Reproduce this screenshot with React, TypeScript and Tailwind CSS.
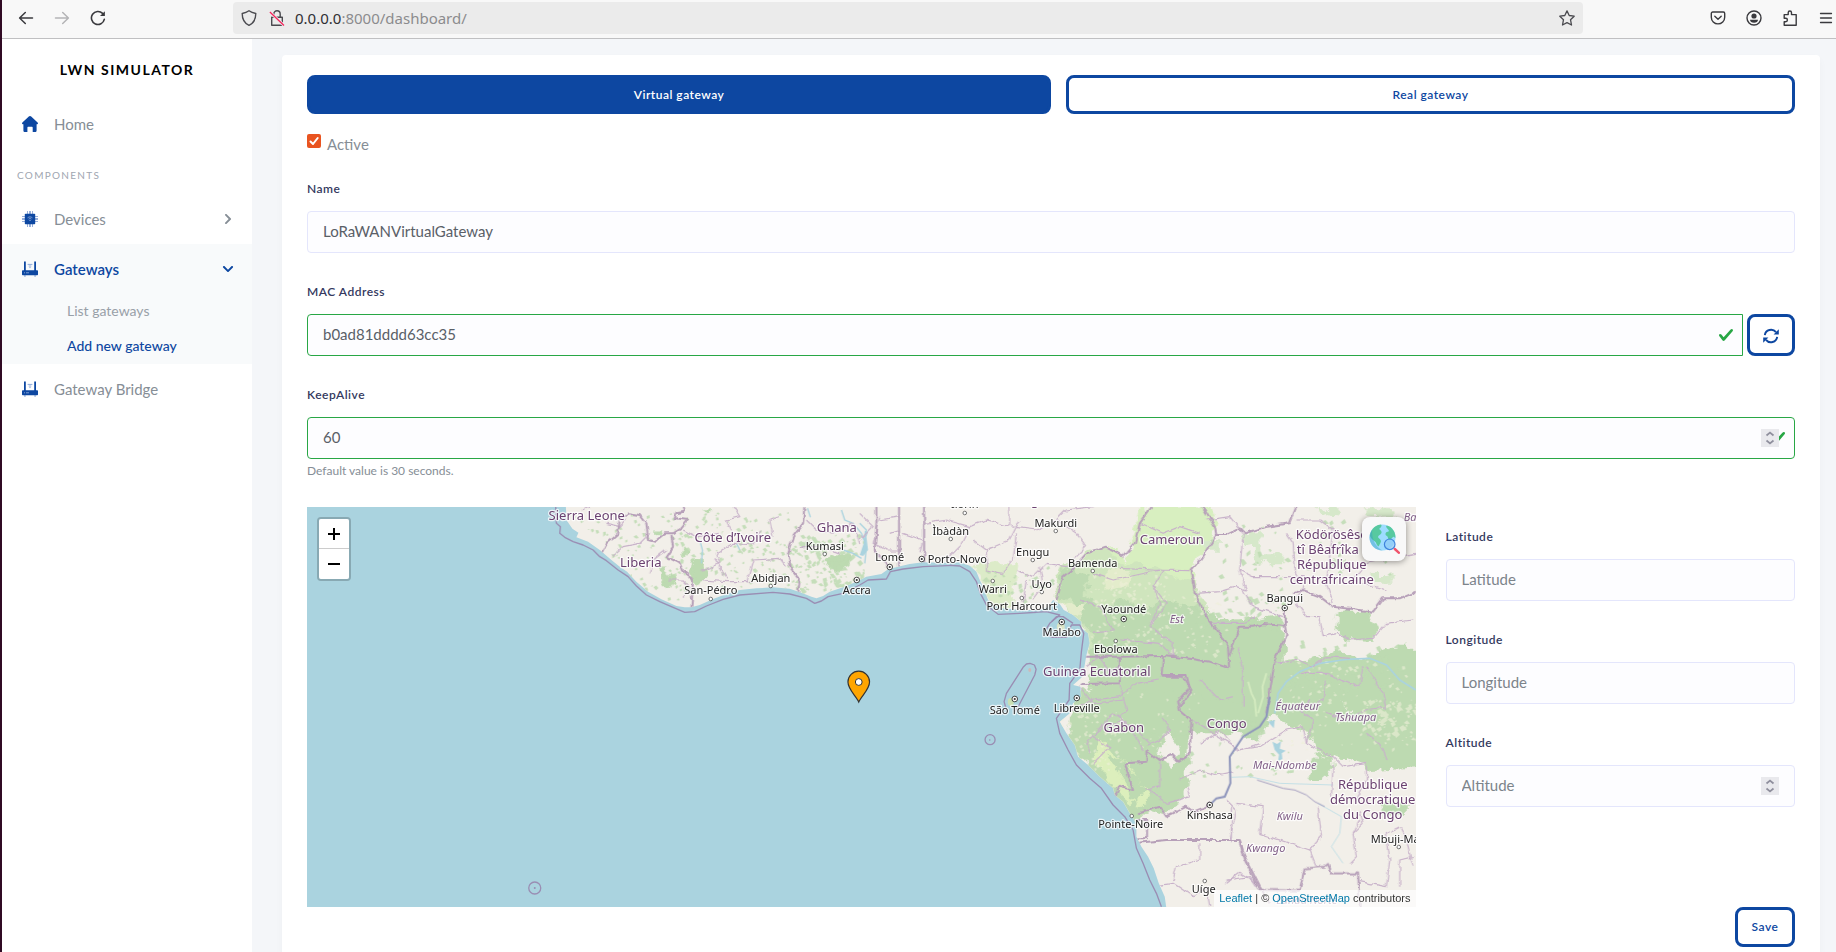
import type { ReactNode } from "react";
import { FaChevronDown, FaChevronRight } from "react-icons/fa";

/* ---------- icons ---------- */

function BackIcon() {
  return (
    <svg viewBox="0 0 16 16" className="size-4" fill="none" stroke="currentColor" strokeWidth="1.5" strokeLinecap="round" strokeLinejoin="round">
      <path d="M14.5 8H1.8M7.3 2.5 1.6 8l5.7 5.5" />
    </svg>
  );
}

function ForwardIcon() {
  return (
    <svg viewBox="0 0 16 16" className="size-4" fill="none" stroke="currentColor" strokeWidth="1.5" strokeLinecap="round" strokeLinejoin="round">
      <path d="M1.5 8h12.7M8.7 2.5 14.4 8l-5.7 5.5" />
    </svg>
  );
}

function ReloadIcon() {
  return (
    <svg viewBox="0 0 16 16" className="size-4" fill="none" stroke="currentColor" strokeWidth="1.6" strokeLinecap="round">
      <path d="M14.3 9.3A6.5 6.5 0 1 1 12.6 3.4" />
      <path d="M14.9 1.2v4.9H10z" fill="currentColor" stroke="none" />
    </svg>
  );
}

function ShieldIcon() {
  return (
    <svg viewBox="0 0 16 16" className="size-4" fill="none" stroke="currentColor" strokeWidth="1.4" strokeLinejoin="round">
      <path d="M8 .8C6.300 2 3.800 3 1.200 3.500 1.200 9 3.400 13.300 8 15.300c4.600-2 6.800-6.300 6.800-11.800C12.200 3 9.700 2 8 .8z" />
    </svg>
  );
}

function InsecureLockIcon() {
  return (
    <svg viewBox="0 0 16 16" className="size-4" fill="none">
      <path d="M2.700 7.200h10.600v8H2.700zM4.800 7V4a3.200 3.200 0 0 1 6.400 0v3" stroke="#4a4a4f" strokeWidth="1.400" strokeLinejoin="round" />
      <path d="M.9 2 15 15.500" stroke="#ebebeb" strokeWidth="3" />
      <path d="M.9 2 15 15.500" stroke="#f5245c" strokeWidth="1.300" />
    </svg>
  );
}

function StarIcon() {
  return (
    <svg viewBox="0 0 16 16" className="size-4" fill="none" stroke="currentColor" strokeWidth="1.3" strokeLinejoin="round">
      <path d="m8 .9 2.200 4.600 5 .7-3.700 3.500 1 5.300L8 12.600 3.500 15l1-5.300L.8 6.200l5-.7z" />
    </svg>
  );
}

function PocketIcon() {
  return (
    <svg viewBox="0 0 16 16" className="size-4" fill="none" stroke="currentColor" strokeWidth="1.4" strokeLinecap="round" strokeLinejoin="round">
      <path d="M2.700 2h10.600c.8 0 1.400.6 1.400 1.400v3.800a6.700 6.700 0 0 1-13.400 0V3.400C1.300 2.600 1.900 2 2.700 2z" />
      <path d="M4.800 6.200 8 9.200l3.200-3" />
    </svg>
  );
}

function AccountIcon() {
  return (
    <svg viewBox="0 0 16 16" className="size-4">
      <circle cx="8" cy="8" r="7" fill="none" stroke="currentColor" strokeWidth="1.4" />
      <circle cx="8" cy="6" r="2.600" fill="currentColor" />
      <path d="M4 9.800h8c0 1.800-1.700 3-4 3s-4-1.200-4-3z" fill="currentColor" />
    </svg>
  );
}

function ExtensionIcon() {
  return (
    <svg viewBox="0 0 16 16" className="size-4" fill="none" stroke="currentColor" strokeWidth="1.4" strokeLinejoin="round">
      <path d="M2.200 4.600h4V2.700a1.600 1.600 0 0 1 3.300 0v1.900h4.700v10.600H2.200v-3.500h1.500a1.700 1.700 0 0 0 0-3.400H2.200z" />
    </svg>
  );
}

function MenuIcon() {
  return (
    <svg viewBox="0 0 16 16" className="size-4" stroke="currentColor" strokeWidth="1.300" strokeLinecap="round">
      <path d="M2.500 3.500h11M2.500 8h11M2.500 12.500h11" />
    </svg>
  );
}

function HomeIcon() {
  return (
    <svg viewBox="0 0 16 16" className="size-4" fill="currentColor">
      <path d="M8 0c.5 0 .9.200 1.200.5l6.400 6.100c.7.700.4 1.700-.5 1.700h-.5v6.100c0 .9-.7 1.600-1.600 1.600h-2.300v-4.200c0-.6-.4-1-1-1H6.400c-.6 0-1 .4-1 1V16H3c-.9 0-1.600-.7-1.600-1.600V8.300H.9c-.9 0-1.200-1-.5-1.700L6.800.5C7.100.200 7.500 0 8 0z" />
    </svg>
  );
}

function ChipIcon() {
  return (
    <svg viewBox="0 0 16 16" className="size-4">
      <path d="M5.500 0v16M7.500 0v16M8.500 0v16M10.500 0v16M0 5.500h16M0 7.500h16M0 8.500h16M0 10.500h16" stroke="#7d9bd0" strokeWidth=".8" />
      <rect x="2.800" y="2.800" width="10.400" height="10.400" rx=".8" fill="#0d47a1" />
      <path d="M5.600 6.800c1.400-1.200 3.400-1.200 4.800 0M6.600 8.100c.8-.7 2-.7 2.800 0" stroke="#8fa9d8" strokeWidth=".9" fill="none" />
      <circle cx="8" cy="9.400" r=".7" fill="#8fa9d8" />
    </svg>
  );
}

function RouterIcon() {
  return (
    <svg viewBox="0 0 16 16" className="size-4">
      <path d="M2 .6h1.800v9.400H2zM12.200.6H14v9.400h-1.800z" fill="#0d47a1" />
      <path d="M5.600 3.400h4.800M6.700 5h2.600" stroke="#8fa9d8" strokeWidth="1" />
      <circle cx="8" cy="6.500" r=".7" fill="#8fa9d8" />
      <rect x="0" y="9.300" width="16" height="5" rx=".8" fill="#0d47a1" />
      <path d="M2 11.800h1M4 11.800h3" stroke="#9bb3de" strokeWidth=".8" />
      <path d="M2 14.300h1.800v1.200H2zM12.200 14.300H14v1.200h-1.800z" fill="#7d9bd0" />
    </svg>
  );
}

function RefreshIcon() {
  return (
    <svg viewBox="0 0 16 16" className="size-4" fill="none" stroke="currentColor" strokeWidth="1.900">
      <path d="M1.800 7.200A6.300 6.300 0 0 1 13 4.200M14.200 8.800A6.300 6.300 0 0 1 3 11.800" />
      <path d="M15.800 1.200v5.200h-5.200zM.2 14.800V9.600h5.200z" fill="currentColor" stroke="none" />
    </svg>
  );
}

function ValidIcon() {
  return (
    <svg viewBox="0 0 8 8" className="size-4" fill="#28a745">
      <path d="M2.300 6.730.6 4.530c-.4-1.040.46-1.400 1.100-.8l1.100 1.400 3.400-3.800c.6-.63 1.600-.27 1.200.7l-4 4.600c-.43.5-.8.4-1.100.1z" />
    </svg>
  );
}

function GlobeSearchIcon() {
  return (
    <svg viewBox="0 0 32 32" className="size-8">
      <circle cx="14.500" cy="14.500" r="13" fill="#9edcff" />
      <path d="M3 9C5 4.500 9 1.700 13 1.600c1.500 1.400-.5 3.400-2 4.400 1.500 1 3 2 2.500 4-1 2-3 2-3.500 4 .5 1.500 2.500 2 3 4-.3 2.500-1.500 3-2.300 5.500-1.700-.5-2.200-3-3.200-4.500C5.500 17.500 3 16 2 13c0-1.500.3-2.700 1-4z" fill="#57c9a0" />
      <path d="M18 3c2-.6 4 .6 5.500 2 2.500 2.300 4 5.500 4 9.500-.8 1-1.500-1.500-2.500-.5-1.500 1.500-2.500 3.500-4 3-1.500-1-.5-3-2-4-1.500-.5-2-2-1-3.500 1-1 2.500-.5 3-1.500-.5-1.800-2.500-2.200-3-5z" fill="#57c9a0" />
      <path d="M14.500 27.500A13 13 0 0 1 1.500 14.500c0-3 .9-5.500 2.500-7.700C4 18 8 24 14.500 27.500z" fill="#3b9fc4" opacity=".45" />
      <circle cx="21.700" cy="21.300" r="5.300" fill="#8fc9f5" fillOpacity=".7" stroke="#3f83dc" strokeWidth="1.200" />
      <path d="m26.800 26 4.200 3.800" stroke="#f0546c" strokeWidth="2.400" strokeLinecap="round" />
    </svg>
  );
}

/* ---------- map ---------- */

type Label = { t: string; x: number; y: number; start?: boolean };

const countries: Label[] = [
  { t: "Sierra Leone", x: 587, y: 520 },
  { t: "Côte d’Ivoire", x: 733, y: 542 },
  { t: "Ghana", x: 837, y: 532 },
  { t: "Liberia", x: 641, y: 567 },
  { t: "Nigeria", x: 1040, y: 505 },
  { t: "Cameroun", x: 1172, y: 544 },
  { t: "Guinea Ecuatorial", x: 1097, y: 676 },
  { t: "Gabon", x: 1124, y: 732 },
  { t: "Congo", x: 1227, y: 728 },
  { t: "Ködörösêse", x: 1332, y: 539 },
  { t: "tî Bêafrîka", x: 1328, y: 554 },
  { t: "République", x: 1332, y: 569 },
  { t: "centrafricaine", x: 1332, y: 584 },
  { t: "République", x: 1373, y: 789 },
  { t: "démocratique", x: 1373, y: 804 },
  { t: "du Congo", x: 1373, y: 819 },
];

const cities: Label[] = [
  { t: "Kumasi", x: 825, y: 550 },
  { t: "Lomé", x: 890, y: 561 },
  { t: "Accra", x: 857, y: 594 },
  { t: "Abidjan", x: 771, y: 582 },
  { t: "San-Pédro", x: 711, y: 594 },
  { t: "Ilorin", x: 965, y: 508 },
  { t: "Ìbàdàn", x: 951, y: 535 },
  { t: "Makurdi", x: 1056, y: 527 },
  { t: "Enugu", x: 1033, y: 556 },
  { t: "Bamenda", x: 1093, y: 567 },
  { t: "Porto-Novo", x: 928, y: 563, start: true },
  { t: "Warri", x: 993, y: 593 },
  { t: "Uyo", x: 1042, y: 588 },
  { t: "Port Harcourt", x: 1022, y: 610 },
  { t: "Malabo", x: 1062, y: 636 },
  { t: "Yaoundé", x: 1124, y: 613 },
  { t: "Ebolowa", x: 1116, y: 653 },
  { t: "São Tomé", x: 1015, y: 714 },
  { t: "Libreville", x: 1077, y: 712 },
  { t: "Bangui", x: 1285, y: 602 },
  { t: "Kinshasa", x: 1210, y: 819 },
  { t: "Pointe-Noire", x: 1131, y: 828 },
  { t: "Uíge", x: 1204, y: 893 },
  { t: "Mbuji-Mayi", x: 1371, y: 843, start: true },
];

const provinces: Label[] = [
  { t: "Est", x: 1177, y: 623 },
  { t: "Équateur", x: 1298, y: 710 },
  { t: "Basse-Kotto", x: 1404, y: 521, start: true },
  { t: "Tshuapa", x: 1356, y: 721 },
  { t: "Mai-Ndombe", x: 1285, y: 769 },
  { t: "Kwilu", x: 1290, y: 820 },
  { t: "Kwango", x: 1266, y: 852 },
  { t: "Lunda Norte", x: 1307, y: 904 },
];

const townDots = [
  [825, 554], [771, 586], [711, 599], [965, 513], [951, 539], [1056, 531], [1033, 560], [1093, 571],
  [993, 581], [1042, 592], [1022, 598], [1116, 641], [1132, 816], [1205, 881], [1399, 847],
];

const capitalDots = [
  [890, 567], [857, 580], [922, 559], [1062, 622], [1124, 619], [1015, 699], [1077, 698], [1285, 608], [1210, 805],
];

function makeSpecks(seed: number, count: number, x: number, y: number, w: number, h: number, size: number) {
  let s = seed;
  const next = () => {
    s = (s * 16807) % 2147483647;
    return s / 2147483647;
  };
  let d = "";
  for (let i = 0; i < count; i++) {
    const px = x + next() * w;
    const py = y + next() * h;
    const r = 1 + next() * size;
    d += `M${px.toFixed(1)} ${py.toFixed(1)}l${r.toFixed(1)} ${(-r * next()).toFixed(1)}l${(r * next()).toFixed(1)} ${r.toFixed(1)}l${(-r).toFixed(1)} ${(r * next()).toFixed(1)}z`;
  }
  return d;
}

const forestSpecks =
  makeSpecks(11, 90, 575, 515, 110, 85, 2) +
  makeSpecks(23, 160, 670, 512, 125, 78, 2) +
  makeSpecks(37, 150, 795, 535, 70, 55, 3) +
  makeSpecks(41, 60, 1195, 590, 90, 40, 4) +
  makeSpecks(53, 60, 1280, 640, 120, 50, 4) +
  makeSpecks(67, 40, 980, 565, 80, 40, 3) +
  makeSpecks(71, 50, 1210, 520, 190, 60, 3) +
  makeSpecks(83, 30, 1180, 720, 110, 60, 3);

const clearingSpecks =
  makeSpecks(101, 130, 1090, 570, 75, 75, 2) +
  makeSpecks(103, 50, 1165, 590, 60, 65, 2) +
  makeSpecks(107, 80, 1060, 710, 60, 60, 2) +
  makeSpecks(109, 110, 1290, 660, 126, 90, 2) +
  makeSpecks(113, 70, 1360, 700, 56, 40, 3) +
  makeSpecks(127, 30, 1110, 690, 90, 60, 1);

/* A tile whose inner coordinates are three times finer than the map's. */
function Tile({ x, y, children }: { x: number; y: number; children: ReactNode }) {
  return <g transform={`translate(${x} ${y}) scale(0.33333)`}>{children}</g>;
}

function MapLabels({ items, className, size }: { items: Label[]; className: string; size: number }) {
  return (
    <g className={className} fontSize={size} stroke="#ffffff" strokeOpacity=".75" strokeWidth="2.500" strokeLinejoin="round" paintOrder="stroke">
      {items.map((l) => (
        <text key={l.t + l.y} x={l.x} y={l.y} textAnchor={l.start ? "start" : "middle"}>
          {l.t}
        </text>
      ))}
    </g>
  );
}

const westCoast =
  "78,10 80,60 98,86 116,98 110,112 145,125 180,150 215,180 240,200 262,215 290,245 325,275 365,298 410,318 435,322 455,322 480,315 520,297 560,282 600,270 650,265 700,262 750,266 785,278 815,290 830,295 850,288 870,275 910,262 950,245 980,230 1025,222 1045,208 1075,200 1110,192 1150,187 1220,184";
const gulfCoast =
  "90,202 120,195 190,187 250,188 300,187 330,197 350,215 360,240 375,270 385,300 400,315 430,325 480,330 540,330 565,320 580,300 600,312 612,330 640,345 665,365 665,385 685,400 690,430 680,465 674,500 668,530 640,555 662,560 664,590 640,610 630,640 600,665 620,700 645,735 655,770 685,795 720,830 760,865 765,885 790,905 810,940 830,970 830,1010 845,1040 865,1070 882,1105 897,1150 915,1190 922,1240";

function MapDrawing() {
  return (
    <svg viewBox="307 507 1109 400" preserveAspectRatio="xMidYMid slice" className="block h-full w-full" role="img" aria-label="Map of the Gulf of Guinea">
      <defs>
        <filter id="rough" x="-5%" y="-5%" width="110%" height="110%">
          <feTurbulence type="fractalNoise" baseFrequency=".09" numOctaves="4" seed="4" />
          <feDisplacementMap in="SourceGraphic" scale="14" xChannelSelector="R" yChannelSelector="G" />
        </filter>
        <filter id="wiggle" x="-5%" y="-5%" width="110%" height="110%">
          <feTurbulence type="fractalNoise" baseFrequency=".12" numOctaves="3" seed="9" />
          <feDisplacementMap in="SourceGraphic" scale="5" xChannelSelector="R" yChannelSelector="G" />
        </filter>
        <clipPath id="land">
          <polygon transform="translate(540 500) scale(0.33333)" points={`${westCoast} 1220,10`} />
          <polygon transform="translate(860 500) scale(0.33333)" points={`${gulfCoast} 1700,1240 1700,10 90,10`} />
        </clipPath>
      </defs>

      <rect x="307" y="507" width="1109" height="400" fill="#aad3df" />
      <g clipPath="url(#land)">
        <rect x="307" y="500" width="1120" height="420" fill="#f2efe9" />

        <g filter="url(#rough)">
          <Tile x={860} y={500}>
            <path fill="#d8efc0" d="M850 20 890 10 1060 20 1075 80 1010 190 1000 260 990 330 960 400 880 400 780 420 700 370 610 300 650 215 680 160 760 140 800 180z" />
            <path fill="#dcebc8" d="M340 200 400 190 470 190 460 320 400 330 360 240z" />
          </Tile>
          <Tile x={860} y={500}>
            <path fill="#cfe5bd" d="M600 195 650 190 690 150 740 145 770 180 820 190 880 200 930 230 1000 240 1040 330 1100 360 1100 480 690 480 680 400 640 350 590 290z" />
            <path fill="#bddab1" d="M610 200 690 220 680 290 720 330 780 290 860 330 900 300 1040 330 1100 360 1180 355 1240 345 1275 365 1275 490 1350 480 1430 450 1500 480 1600 440 1700 440 1700 620 1640 680 1540 670 1500 650 1440 600 1290 600 1215 650 1200 720 1150 700 1120 660 1040 680 1000 740 990 840 960 900 910 945 860 930 820 980 760 880 700 820 650 760 620 700 640 600 690 560 690 470 700 420 640 310 600 290z" />
            <path fill="#bddab1" d="M1430 335 1530 335 1555 390 1540 420 1450 415 1425 375z" />
            <path fill="#bddab1" d="M1160 640 1270 550 1400 560 1480 640 1700 620 1700 800 1540 810 1460 780 1380 760 1340 700 1250 650 1180 700z" />
            <path fill="#f2efe9" d="M920 690 960 760 940 800 900 760zM985 720 1040 640 1110 690 1150 750 1100 850 980 850zM1260 750 1340 700 1350 790 1290 810z" />
            <path fill="#dcefbc" d="M720 710 800 800 870 870 820 910 750 850 700 780zM735 760 775 800 830 930 880 890 800 790z" />
            <path fill="#e3eccb" d="M610 320 680 300 660 350zM740 210 810 210 800 260 740 270z" />
          </Tile>
          <Tile x={540} y={500}>
            <path fill="#bddab1" d="M360 200 380 200 385 225 410 225 410 250 370 262 360 240zM462 180 485 182 495 240 470 262 455 225zM425 150 445 150 445 165 425 165zM870 165 930 160 930 195 890 215 860 195zM340 95 365 95 360 115 345 112zM490 25 515 25 510 38z" />
          </Tile>
          <Tile x={1120} y={500}>
            <path fill="#d6e8ca" d="M375 100 420 95 425 160 490 160 490 190 405 190 405 140 375 145zM250 120 300 120 300 155 255 155zM740 25 830 25 830 50 740 55zM580 25 660 25 655 52 625 50zM630 180 680 180 680 210 640 205zM755 225 815 225 815 245 755 245z" />
            <path fill="#bddab1" d="M0 590 40 560 100 580 200 570 260 600 400 610 400 700 0 700z" />
          </Tile>
          <Tile x={1200} y={700}>
            <path fill="#bddab1" d="M340 200 350 160 395 170 400 215 352 245 320 240zM550 310 618 315 618 345 560 340z" />
          </Tile>
        </g>
        <path d={forestSpecks} fill="#bddab1" opacity=".85" />
        <path d={clearingSpecks} fill="#eef0d8" opacity=".6" />

        <Tile x={1120} y={500}>
          <path fill="none" stroke="#aad3df" strokeWidth="5" d="M888 570 840 540 800 495 750 475 680 478 600 490 540 515 500 545 475 580 465 640" />
          <path fill="none" stroke="#d3eabf" strokeWidth="6" strokeLinejoin="round" d="M385 545 395 580 405 600 410 650M440 520 428 560 430 590 415 640" />
        </Tile>
        <Tile x={540} y={500}>
          <path fill="none" stroke="#aad3df" strokeWidth="4" d="M910 150 940 160 965 175M975 190 980 140 965 100 940 70 915 60 905 30M960 70 980 90 975 120M485 190 488 150 480 120M590 130 600 150M803 25 812 52" />
          <path fill="#aad3df" d="M960 165 970 168 985 150 980 110 985 95 975 92 972 130z" />
        </Tile>
        <Tile x={1200} y={700}>
          <path fill="#aad3df" d="M218 125 232 132 244 124 240 146 258 152 246 160 248 178 235 182 238 164 225 150zM205 65 225 60 222 85z" />
          <path fill="none" stroke="#c4e0e6" strokeWidth="3" d="M95 232 150 230 240 250 400 255M355 310 425 350 420 400 395 440 430 490" />
        </Tile>

        {/* provincial boundaries */}
        <g filter="url(#wiggle)" fill="none" stroke="#c8b2ca" strokeWidth="3.500" strokeLinejoin="round">
          <Tile x={540} y={500}>
            <path d="M130 30 150 20M200 70 240 80 260 60M215 170 250 140 300 130 330 100M330 220 340 180 380 150M385 240 430 240 450 260 430 290M480 215 540 190 530 160 580 130 640 135 660 90M525 175 560 235M580 100 560 60 600 50 580 20M620 250 640 180 720 175 740 200M700 110 690 60 720 50M490 240 560 245 640 245M800 60 830 90 880 100 940 70 960 130M780 140 840 140 900 160M1050 100 1080 90M1020 50 1000 130 1040 150 1080 150M430 90 470 110 540 100" />
          </Tile>
          <Tile x={860} y={500}>
            <path d="M0 40 40 80 0 120M60 60 120 50M130 100 190 120 180 160M195 70 260 60 330 80 380 60 450 80 450 20M330 80 300 140 260 180M340 120 380 150 450 120 480 60M380 150 380 210 430 220 460 180 470 100M450 80 530 90 590 60 650 100 680 140 620 200 560 190 520 230 470 210M540 200 550 260 520 300M500 240 490 310M590 60 620 30 700 20M700 220 760 240 900 210M660 300 720 320 760 390 700 400M780 420 900 430 940 470M880 260 920 310 870 380M680 500 720 470 750 520 780 500M620 640 700 600 780 590 830 550 900 540M700 790 750 740 700 710 760 640 830 690 870 730" />
          </Tile>
          <Tile x={1120} y={500}>
            <path d="M0 205 100 210 210 212M60 70 130 100 180 80 240 100M260 60 330 50 370 100 360 210 400 230 480 230M230 280 300 275 350 260 380 270 360 210M370 270 400 320 490 350M270 370 370 370 410 350M130 210 100 260 120 310 90 380 160 430 160 470M490 230 560 230 530 310 560 350 600 350 610 410 650 400 690 420 760 415 800 370 880 360M530 250 520 130 500 100M530 60 600 60 640 90 620 250 640 310M800 270 700 240 740 190 888 160M355 440 370 520 370 620M460 490 540 480 580 500 620 470 690 475M540 520 620 520 720 560 730 500M620 540 610 600 560 620M740 500 790 580 800 630M240 540 300 600 340 590" />
          </Tile>
          <Tile x={960} y={620}>
            <path d="M360 200 400 250 490 240M480 190 500 270 480 290 530 350 550 390M610 290 630 330 600 360 560 380M390 400 380 360 440 320 500 300M600 420 600 500 560 510M660 480 720 450 770 465 820 455M570 510 620 550 690 530 680 500M800 540 830 570 810 660M640 780 650 740 720 720 720 670M570 800 640 790 700 830 740 800 750 860M700 300 760 340 840 390 900 370M800 790 840 760 890 790" />
          </Tile>
          <Tile x={1200} y={700}>
            <path d="M0 130 60 90 110 150 180 140 260 90 310 80 320 130 400 170 430 200 500 190M400 195 395 290M500 190 500 240 470 300M110 310 190 320 180 400 330 450 365 410 355 320M330 450 350 500M95 430 95 320M460 400 490 370 480 330M480 360 460 400 470 470 450 490M480 545 560 560 570 480 560 400 600 380 620 420 640 500M600 560 600 480 640 470M320 130 340 60 300 30 330 0M80 540 150 530 170 560M380 40 440 60 500 30 560 20M500 100 540 130 560 180" />
          </Tile>
        </g>

        {/* national boundaries */}
        <g filter="url(#wiggle)" fill="none" stroke="#b7a0b9" strokeWidth="6" strokeLinejoin="round">
          <Tile x={540} y={500}>
            <path d="M185 160 200 130 235 100 240 60 265 40 300 45 320 70 325 120 345 125 375 100 400 100 425 85 445 60 405 55 410 40 435 35 430 10M395 105 400 140 380 170 420 190 430 215 460 235 455 325M795 10 790 70 760 110 745 160 755 210 780 240 775 280M1010 20 1010 70 1005 150 1030 180 1045 205M1078 10 1078 200M1153 10 1153 190" />
          </Tile>
          <Tile x={860} y={500}>
            <path d="M880 15 840 70 825 130 790 170 735 140 680 160 640 205 610 230 590 300M670 470 780 470 780 550 665 552M780 470 910 468" />
          </Tile>
          <Tile x={1120} y={500}>
            <path d="M245 10 285 80 290 105 240 180 215 210 230 290 260 350 300 400 325 440 328 505 270 485 200 475 130 468 125 530 190 530 215 570 180 620M285 105 320 105 360 85 375 100 440 80 510 70 530 20M328 470 360 380 400 380 430 372 495 378 495 330M495 378 500 405 465 480 450 580 440 640M520 280 550 270 600 290 640 320 720 330 760 335 790 295 840 295 888 275" />
          </Tile>
          <Tile x={960} y={620}>
            <path d="M605 165 680 165 690 205 655 245 660 270 695 300 690 400 655 425 635 405 600 420 560 390 560 425 495 430 510 480 520 510 480 500 465 530M535 580 570 570 600 560 620 590 680 560 700 575 740 560 750 545M530 655 562 655 562 600 535 600M535 668 620 660 840 660 850 700 900 800 930 850" />
          </Tile>
          <Tile x={1200} y={700}>
            <path d="M120 422 135 480 180 570 300 572 315 505 375 500 385 492 395 520 475 520 480 620" />
          </Tile>
        </g>
        <Tile x={1200} y={700}>
          <path fill="none" stroke="#8d94bb" strokeWidth="6" strokeLinejoin="round" d="M210 -10 200 50 180 80 130 110 90 170 92 250 75 290 50 295 30 315" />
          <path fill="none" stroke="#a59fc0" strokeWidth="3" strokeLinejoin="round" d="M172 240 210 252 250 265 285 270 320 285 345 305 375 320" />
        </Tile>
      </g>

      {/* maritime boundaries */}
      <g fill="none" stroke="#9a8db3" strokeWidth="4" strokeLinejoin="round">
        <Tile x={540} y={500}>
          <path d="M48 20 50 70 62 80 60 100 75 112 100 125 130 135 160 150 180 170 200 182 235 210 265 230 290 258 320 285 360 305 400 322 435 337 465 335 500 318 550 298 600 285 700 277 750 282 800 295 825 310 845 303 865 290 910 280 960 255 985 240 1040 237 1052 215 1090 207 1150 200 1240 196" />
        </Tile>
        <Tile x={860} y={500}>
          <path d="M270 196 300 198 330 215 350 245 362 280 380 315 415 343 480 340 560 335 600 345 570 370 555 395 575 412 620 412 635 375 660 375 672 400 665 455 660 510 630 550 628 600 590 655 600 700 625 750 650 795 690 835 725 865 760 915 795 950 820 990 830 1045 850 1090 870 1140 890 1180 905 1220" />
          <path d="M575 365 590 350 610 350 640 370M440 630 433 605 440 580 490 502 500 492 511 490 524 495 529 508 525 525 478 615 465 635" />
          <circle cx="391" cy="719" r="15" />
        </Tile>
        <circle cx="535" cy="888" r="6" strokeWidth="1.300" />
      </g>
      <circle cx="535" cy="888" r="1" fill="#9a8db3" />
      <circle cx="990" cy="740" r=".8" fill="#9a8db3" />
      <ellipse cx="1011" cy="702" rx="3" ry="4" fill="#c9dfb4" />
      <ellipse cx="1030" cy="670" rx="1.500" ry="2" fill="#cdb9b9" />
      <ellipse cx="1061" cy="627" rx="4" ry="5" fill="#dce5c6" />

      {townDots.map(([x, y]) => (
        <circle key={`${x}-${y}`} cx={x} cy={y} r="1.800" fill="#ffffff" stroke="#555555" strokeWidth=".8" />
      ))}
      {capitalDots.map(([x, y]) => (
        <g key={`${x}-${y}`}>
          <circle cx={x} cy={y} r="2.800" fill="#ffffff" stroke="#333333" strokeWidth=".9" />
          <circle cx={x} cy={y} r="1.100" fill="#333333" />
        </g>
      ))}
      <MapLabels items={provinces} size={11} className="fill-[#815f88] font-['Noto_Sans',sans-serif] italic" />
      <MapLabels items={countries} size={13} className="fill-[#6b4271] font-['Noto_Sans',sans-serif]" />
      <MapLabels items={cities} size={11} className="fill-[#222222] font-['Noto_Sans',sans-serif]" />

      <path d="M859 702c-2.500-6-10.800-12.500-10.800-20a10.800 10.800 0 0 1 21.600 0c0 7.500-8.300 14-10.800 20z" fill="#ffa500" stroke="#333333" strokeWidth="1.200" />
      <circle cx="859" cy="682" r="3.400" fill="#ffffff" stroke="#333333" strokeWidth="1" />
    </svg>
  );
}

function GatewayMap() {
  return (
    <div className="relative h-[400px] overflow-hidden">
      <MapDrawing />
      <div className="absolute top-[10px] left-[10px] flex flex-col overflow-hidden rounded border-2 border-[#88a9b3] text-black">
        <button type="button" aria-label="Zoom in" className="flex h-[30px] w-[30px] items-center justify-center border-b border-[#cccccc] bg-white">
          <svg viewBox="0 0 12 12" className="size-3" stroke="currentColor" strokeWidth="2">
            <path d="M6 0v12M0 6h12" />
          </svg>
        </button>
        <button type="button" aria-label="Zoom out" className="flex h-[30px] w-[30px] items-center justify-center bg-white">
          <svg viewBox="0 0 12 12" className="size-3" stroke="currentColor" strokeWidth="2">
            <path d="M0 6h12" />
          </svg>
        </button>
      </div>
      <button type="button" aria-label="Search location" className="absolute top-[10px] right-[10px] flex size-11 items-center justify-center rounded-lg bg-[#f8f8f8] shadow-[0_1px_6px_rgba(0,0,0,0.4)]">
        <GlobeSearchIcon />
      </button>
      <div className="absolute right-0 bottom-0 bg-white/70 px-[5px] font-['Liberation_Sans',Arial,sans-serif] text-[11px] leading-[17px] text-[#333333]">
        <a href="#leaflet" className="text-[#0078a8]">Leaflet</a> | © <a href="#osm" className="text-[#0078a8]">OpenStreetMap</a> contributors
      </div>
    </div>
  );
}

/* ---------- form ---------- */

const fieldBase = "h-[42px] w-full border bg-[#fdfdff] px-[15px] pb-[2px] text-[15px] text-[#5a6067] outline-none placeholder:text-[#7c848b]";
const plainNumber = "[appearance:textfield] [&::-webkit-inner-spin-button]:appearance-none";

function Spinner() {
  return (
    <span aria-hidden="true" className="absolute top-3 right-4 flex size-[18px] items-center justify-center bg-[#e9e9ed] text-[#8f8f9d]">
      <svg viewBox="0 0 18 18" className="size-[18px]" fill="none" stroke="currentColor" strokeWidth="1.700">
        <path d="M5.500 6.500 9 3.500l3.500 3M5.500 11.500l3.500 3 3.500-3" />
      </svg>
    </span>
  );
}

function Field({ id, label, children }: { id: string; label: string; children: ReactNode }) {
  return (
    <div className="flex flex-col gap-3">
      <label htmlFor={id} className="text-[12px] leading-5 font-semibold tracking-[0.5px] text-[#34395e]">
        {label}
      </label>
      {children}
    </div>
  );
}

/* ---------- shell ---------- */

function BrowserBar() {
  return (
    <header className="flex h-[39px] items-center border-b border-[#c0c0c2] bg-[#f8f8f8] pb-[2px] text-[#3a3a3e]">
      <div className="flex w-[231px] shrink-0 items-center gap-5 pl-4">
        <button type="button" aria-label="Back"><BackIcon /></button>
        <button type="button" aria-label="Forward" className="text-[#b4b4b6]"><ForwardIcon /></button>
        <button type="button" aria-label="Reload"><ReloadIcon /></button>
      </div>
      <div className="flex h-8 min-w-0 flex-1 items-center rounded bg-[#ebebeb] px-2 font-['Noto_Sans',sans-serif] text-[15px] text-[#4a4a4f]">
        <ShieldIcon />
        <span className="ml-3"><InsecureLockIcon /></span>
        <span className="ml-[10px] text-[#2f2f33]">0.0.0.0</span>
        <span className="text-[#8b8b8e]">:8000/dashboard/</span>
        <button type="button" aria-label="Bookmark" className="ml-auto"><StarIcon /></button>
      </div>
      <div className="flex w-[253px] shrink-0 items-center justify-end gap-5 pr-[2px]">
        <button type="button" aria-label="Pocket"><PocketIcon /></button>
        <button type="button" aria-label="Account"><AccountIcon /></button>
        <button type="button" aria-label="Extensions"><ExtensionIcon /></button>
        <button type="button" aria-label="Menu"><MenuIcon /></button>
      </div>
    </header>
  );
}

function NavLink({ icon, label, active, end }: { icon: ReactNode; label: string; active?: boolean; end?: ReactNode }) {
  return (
    <a
      href={`#${label}`}
      className={`flex h-[50px] items-center gap-4 pr-[18px] pl-5 text-[15px] ${active ? "font-semibold text-[#0d47a1]" : "text-[#868e96]"}`}
    >
      <span className="text-[#0d47a1]">{icon}</span>
      {label}
      <span className="ml-auto">{end}</span>
    </a>
  );
}

function Sidebar() {
  return (
    <nav className="w-[250px] shrink-0 bg-white">
      <a href="#top" className="flex h-[60px] items-center justify-center text-[14px] font-bold tracking-[1.500px] text-black">
        LWN SIMULATOR
      </a>
      <NavLink icon={<HomeIcon />} label="Home" />
      <p className="flex h-[45px] items-center px-[15px] pt-2 text-[10px] tracking-[1.300px] text-[#a0a6b1]">COMPONENTS</p>
      <NavLink icon={<ChipIcon />} label="Devices" end={<FaChevronRight className="size-3 text-[#868e96]" />} />
      <div className="bg-[#f8fafb]">
        <NavLink icon={<RouterIcon />} label="Gateways" active end={<FaChevronDown className="size-3" />} />
        <div className="flex flex-col text-[14px]">
          <a href="#list" className="flex h-[35px] items-center pb-[3px] pl-[65px] text-[#98a0a8]">List gateways</a>
          <a href="#add" className="flex h-[35px] items-center pb-[3px] pl-[65px] font-medium text-[#0d47a1]">Add new gateway</a>
        </div>
      </div>
      <NavLink icon={<RouterIcon />} label="Gateway Bridge" />
    </nav>
  );
}

const outlineButton = "rounded-lg border-[3px] border-[#0d47a1] text-[12px] font-semibold tracking-[0.5px]";

export default function App() {
  return (
    <div className="flex min-h-screen flex-col border-l-2 border-[#300a24] bg-[#f4f6f9] font-['Lato','Open_Sans',sans-serif]">
      <BrowserBar />
      <div className="flex flex-1">
        <Sidebar />
        <main className="flex min-w-0 flex-1 flex-col pt-4 pr-4 pl-[30px]">
          <form className="flex-1 rounded-t bg-white px-[25px] pt-5 pb-[5px] shadow-[0_4px_8px_rgba(0,0,0,0.03)]">
            <div className="flex gap-[15px]">
              <button type="button" className={`h-[39px] w-1/2 bg-[#0d47a1] text-white ${outlineButton}`}>Virtual gateway</button>
              <button type="button" className={`h-[39px] flex-1 bg-white text-[#0d47a1] ${outlineButton}`}>Real gateway</button>
            </div>

            <div className="mt-5 flex items-start gap-[6px]">
              <span className="relative flex size-[14px]">
                <input id="active" type="checkbox" defaultChecked className="size-[14px] appearance-none rounded-xs bg-[#e95420]" />
                <svg viewBox="0 0 14 14" className="pointer-events-none absolute inset-0 size-[14px]" fill="none" stroke="#ffffff" strokeWidth="2" strokeLinecap="round" strokeLinejoin="round">
                  <path d="m3.500 7.500 2.500 2.500 4.700-6" />
                </svg>
              </span>
              <label htmlFor="active" className="text-[15px] leading-5 text-[#868e96]">Active</label>
            </div>

            <div className="mt-[25px] flex flex-col gap-[29px]">
              <Field id="name" label="Name">
                <input id="name" type="text" defaultValue="LoRaWANVirtualGateway" className={`rounded border-[#e4e6fc] ${fieldBase}`} />
              </Field>
              <Field id="mac" label="MAC Address">
                <div className="flex gap-1">
                  <div className="relative flex-1">
                    <input id="mac" type="text" defaultValue="b0ad81dddd63cc35" className={`rounded-l border-[#28a745] ${fieldBase}`} />
                    <span className="pointer-events-none absolute top-[13px] right-[9px]"><ValidIcon /></span>
                  </div>
                  <button type="button" aria-label="Generate MAC address" className={`flex h-[42px] w-12 items-center justify-center bg-white pt-[2px] text-[#0d47a1] ${outlineButton}`}>
                    <RefreshIcon />
                  </button>
                </div>
              </Field>
              <Field id="keepalive" label="KeepAlive">
                <div className="relative">
                  <input id="keepalive" type="number" defaultValue="60" className={`rounded border-[#28a745] ${fieldBase} ${plainNumber}`} />
                  <span className="pointer-events-none absolute top-[13px] right-[9px]"><ValidIcon /></span>
                  <Spinner />
                </div>
              </Field>
            </div>
            <p className="mt-[2px] text-[12px] leading-5 text-[#868e96]">Default value is 30 seconds.</p>

            <div className="mt-[26px] grid grid-cols-12 gap-[30px]">
              <div className="col-span-9">
                <GatewayMap />
              </div>
              <div className="col-span-3 flex flex-col gap-[29px] pt-5">
                <Field id="latitude" label="Latitude">
                  <input id="latitude" type="text" placeholder="Latitude" className={`rounded border-[#e4e6fc] ${fieldBase}`} />
                </Field>
                <Field id="longitude" label="Longitude">
                  <input id="longitude" type="text" placeholder="Longitude" className={`rounded border-[#e4e6fc] ${fieldBase}`} />
                </Field>
                <Field id="altitude" label="Altitude">
                  <div className="relative">
                    <input id="altitude" type="number" placeholder="Altitude" className={`rounded border-[#e4e6fc] ${fieldBase} ${plainNumber}`} />
                    <Spinner />
                  </div>
                </Field>
              </div>
            </div>
            <div className="flex justify-end">
              <button type="submit" className={`h-10 w-[60px] bg-white text-[#0d47a1] ${outlineButton}`}>Save</button>
            </div>
          </form>
        </main>
      </div>
    </div>
  );
}
